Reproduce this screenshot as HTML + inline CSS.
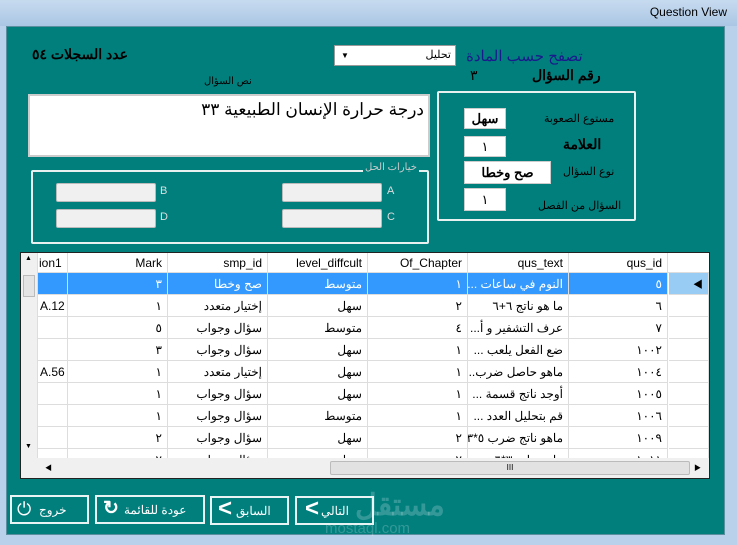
<!DOCTYPE html>
<html><head><meta charset="utf-8"><style>
*{margin:0;padding:0;box-sizing:border-box}
body{width:737px;height:545px;overflow:hidden;background:#b9d1ea;font-family:"Liberation Sans","Noto Sans CJK SC",sans-serif;position:relative}
.a{position:absolute}
.t{font-family:"Liberation Sans","DejaVu Sans",sans-serif}
.box{position:absolute;background:#fff;border:1px solid #ccc;font-size:13px;text-align:center}
.gb{position:absolute;border:2px solid #e8f0f0;border-radius:2px}
.opt{position:absolute;width:100px;height:19px;background:#f0f0f0;border:1px solid #bbb;border-radius:2px}
.cell{position:absolute;height:22px;border-right:1px solid #ddd;border-bottom:1px solid #ddd;font-size:12px;line-height:22px;text-align:right;padding-right:5px;white-space:nowrap;overflow:hidden;background:#fff}
.rtl{direction:rtl;text-align:right;padding-right:0;padding-left:0}
.rtl span{padding-right:5px}
.btn{position:absolute;height:29px;border:2px solid #e8f4f4;color:#fff;font-size:12px;line-height:25px}
</style></head><body>
<div class="a" style="left:0;top:0;width:737px;height:26px;background:linear-gradient(#c7dbef,#aac6e4)"></div>
<div class="a t" style="right:10px;top:5px;font-size:12px;color:#000">Question View</div>
<div class="a" style="left:6px;top:26px;width:719px;height:509px;background:#007f7d;border:1px solid #5a8fa0"></div>
<div class="a" style="left:725px;top:26px;width:12px;height:519px;background:#b9d1ea"></div>

<div class="a" style="left:32px;top:46px;font-size:14px;font-weight:bold;color:#000;direction:rtl">عدد السجلات ٥٤</div>
<div class="a" style="left:334px;top:45px;width:122px;height:21px;background:#fff;border:1px solid #999;font-size:11px;line-height:19px;text-align:right;padding-right:4px">تحليل<span style="position:absolute;left:6px;top:0;font-size:8px">▼</span></div>
<div class="a" style="left:466px;top:47px;font-size:15px;color:#1a1a8c">تصفح حسب المادة</div>
<div class="a" style="left:532px;top:67px;font-size:14px;font-weight:bold;color:#000">رقم السؤال</div>
<div class="a" style="left:470px;top:67px;font-size:14px;color:#000">٣</div>
<div class="a" style="left:204px;top:76px;font-size:10px;color:#000">نص السؤال</div>
<div class="a" style="left:28px;top:94px;width:402px;height:63px;background:#fff;border:2px solid #ccc;font-size:17px;text-align:right;padding:4px 4px 0 0;direction:rtl">درجة حرارة الإنسان الطبيعية ٣٣</div>

<div class="gb" style="left:437px;top:91px;width:199px;height:130px"></div>
<div class="box" style="left:464px;top:108px;width:42px;height:21px;font-weight:bold;line-height:19px">سهل</div>
<div class="a" style="left:544px;top:112px;font-size:11px;color:#000">مستوع الصعوبة</div>
<div class="box" style="left:464px;top:136px;width:42px;height:21px;line-height:19px">١</div>
<div class="a" style="left:563px;top:136px;font-size:14px;font-weight:bold;color:#000">العلامة</div>
<div class="box" style="left:464px;top:161px;width:87px;height:23px;font-weight:bold;line-height:21px">صح وخطا</div>
<div class="a" style="left:563px;top:165px;font-size:11px;color:#000">نوع السؤال</div>
<div class="box" style="left:464px;top:188px;width:42px;height:23px;line-height:21px">١</div>
<div class="a" style="left:538px;top:199px;font-size:11px;color:#000">السؤال من الفصل</div>

<div class="gb" style="left:31px;top:170px;width:398px;height:74px"></div>
<div class="a" style="left:363px;top:162px;font-size:10px;color:#ccc;background:#007f7d;padding:0 2px">خيارات الحل</div>
<div class="opt" style="left:56px;top:183px"></div><div class="a t" style="left:160px;top:185px;font-size:11px;color:#ddd">B</div>
<div class="opt" style="left:282px;top:183px"></div><div class="a t" style="left:387px;top:185px;font-size:11px;color:#ddd">A</div>
<div class="opt" style="left:56px;top:209px"></div><div class="a t" style="left:160px;top:211px;font-size:11px;color:#ddd">D</div>
<div class="opt" style="left:282px;top:209px"></div><div class="a t" style="left:387px;top:211px;font-size:11px;color:#ddd">C</div>

<div class="a" style="left:20px;top:252px;width:690px;height:227px;background:#f0f0f0;border:1px solid #222"></div>
<div id="grid" class="a" style="left:21px;top:253px;width:688px;height:225px;overflow:hidden;background:#fff">
</div>
<script>
var g=document.getElementById('grid');
var cols=[17,47,147,247,347,447,548,647];
var heads=['ion1','Mark','smp_id','level_diffcult','Of_Chapter','qus_text','qus_id'];
var rows=[
['','٣','صح وخطا','متوسط','١','النوم في ساعات ...','٥'],
['A.12','١','إختيار متعدد','سهل','٢','ما هو ناتج ٦+٦','٦'],
['','٥','سؤال وجواب','متوسط','٤','عرف التشفير و أ...','٧'],
['','٣','سؤال وجواب','سهل','١','ضع الفعل يلعب ...','١٠٠٢'],
['A.56','١','إختيار متعدد','سهل','١','ماهو حاصل ضرب...','١٠٠٤'],
['','١','سؤال وجواب','سهل','١','أوجد ناتج قسمة ...','١٠٠٥'],
['','١','سؤال وجواب','متوسط','١','قم بتحليل العدد ...','١٠٠٦'],
['','٢','سؤال وجواب','سهل','٢','ماهو ناتج ضرب ٥*٣','١٠٠٩'],
['','٢','سؤال وجواب','سهل','٢','ما هو ناتج ٣*٦','١٠١١']];
var h='<div style="position:absolute;left:0;top:0;width:688px;height:20px;background:#fff;border-bottom:1px solid #ddd"></div>';
for(var i=0;i<7;i++){h+='<div class="cell t" style="left:'+cols[i]+'px;top:0;height:20px;line-height:20px;width:'+(cols[i+1]-cols[i])+'px;'+(i==0?'text-align:left;padding-left:1px;':'')+'">'+heads[i]+'</div>';}
for(var r=0;r<rows.length;r++){var y=20+r*22;var sel=r==0;
for(var i=0;i<7;i++){var cls=i==0?'cell':'cell rtl';var txt=i==0?rows[r][i]:'<span>'+rows[r][i]+'</span>';
h+='<div class="'+cls+'" style="left:'+cols[i]+'px;top:'+y+'px;width:'+(cols[i+1]-cols[i])+'px;'+(sel?'background:#3399ff;color:#fff;':'')+(i==0?'text-align:left;padding-left:2px;':'')+'">'+txt+'</div>';}
h+='<div class="cell" style="left:648px;top:'+y+'px;width:40px;'+(sel?'background:#99ccf5;':'')+'">'+(sel?'<span style="font-size:10px;color:#000">◀</span>':'')+'</div>';}
h+='<div style="position:absolute;left:0;top:0;width:17px;height:205px;background:#f0f0f0;border-right:1px solid #ddd"><div style="position:absolute;left:2px;top:22px;width:12px;height:22px;background:#e4e4e4;border:1px solid #bbb"></div><div style="position:absolute;left:4px;top:2px;font-size:7px">▲</div><div style="position:absolute;left:4px;top:190px;font-size:7px">▼</div></div>';
h+='<div style="position:absolute;left:0;top:205px;width:688px;height:20px;background:#f0f0f0"><div style="position:absolute;left:309px;top:3px;width:360px;height:14px;background:#e2e2e2;border:1px solid #bbb;border-radius:2px;text-align:center;font-size:8px;line-height:12px">III</div><div style="position:absolute;left:24px;top:5px;font-size:7px">◀</div><div style="position:absolute;left:673px;top:5px;font-size:7px">▶</div></div>';
g.innerHTML=h;
</script>

<div class="btn" style="left:10px;top:495px;width:79px"><span style="position:absolute;left:5px;top:2px;font-size:18px;line-height:20px">⏻</span><span style="position:absolute;left:27px;top:1px">خروج</span></div>
<div class="btn" style="left:95px;top:495px;width:110px"><span style="position:absolute;left:6px;top:0;font-size:19px;line-height:24px;font-weight:bold">↻</span><span style="position:absolute;left:27px;top:1px">عودة للقائمة</span></div>
<div class="btn" style="left:210px;top:496px;width:79px"><span style="position:absolute;left:6px;top:-2px;font-size:24px;font-weight:bold">&lt;</span><span style="position:absolute;left:24px;top:1px">السابق</span></div>
<div class="btn" style="left:295px;top:496px;width:79px"><span style="position:absolute;left:8px;top:-2px;font-size:24px;font-weight:bold">&lt;</span><span style="position:absolute;left:24px;top:1px">التالي</span></div>
<div class="a" style="left:355px;top:488px;font-size:30px;font-weight:bold;color:rgba(255,255,255,0.2)">مستقل</div>
<div class="a t" style="left:325px;top:520px;font-size:15px;color:rgba(255,255,255,0.2)">mostaql.com</div>
</body></html>
